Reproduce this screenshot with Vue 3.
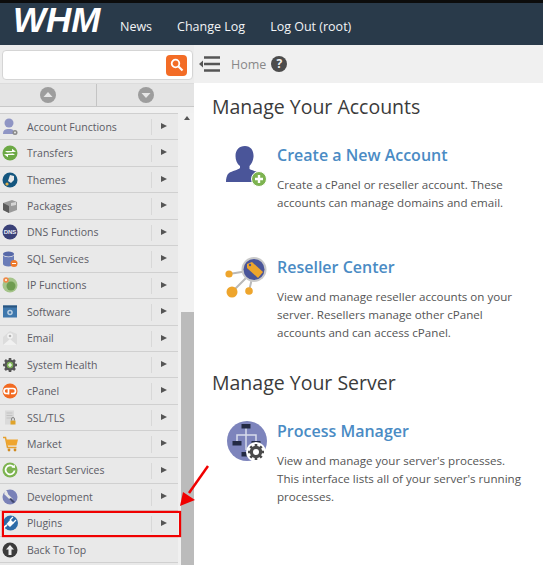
<script setup>
// sidebar entries, icon markup is on a 20x20 box
const menu = [
  { label: 'Account Functions', icon: '<circle cx="9" cy="6" r="4.5" fill="#8f95c4"/><path d="M3 17c0-4 2-5 6-5s5 1 5 5z" fill="#8f95c4"/><circle cx="15" cy="15.5" r="2.500" fill="#8a8a8a"/><circle cx="15" cy="15.5" r="1" fill="#e8e8e8"/>' },
  { label: 'Transfers', icon: '<circle cx="10" cy="10" r="7.5" fill="#6ca945"/><path d="M5 8h7V5.8l4 3-9 .6zM15 12H8v2.2l-4-3 9-.6z" fill="#fff"/>' },
  { label: 'Themes', icon: '<circle cx="10" cy="10" r="7.5" fill="#14567f"/><path d="M8 11l2-6 4 1 0 4-3 3z" fill="#e8e8e8"/><circle cx="7" cy="14" r="1.6" fill="#e0b050"/>' },
  { label: 'Packages', icon: '<path d="M3 7l9-3 5 2v8l-8 3-6-3z" fill="#9a9a9a"/><path d="M3 7l6 3v7l-6-3z" fill="#5a5a5a"/><path d="M11 7l5-1v3l-5 1z" fill="#d5d5d5"/>' },
  { label: 'DNS Functions', icon: '<circle cx="10" cy="10" r="7.5" fill="#3a4178"/><text x="10" y="12" text-anchor="middle" font-family="Liberation Sans, sans-serif" font-size="6" font-weight="700" fill="#eceef6">DNS</text>' },
  { label: 'SQL Services', icon: '<ellipse cx="8.500" cy="5" rx="5.500" ry="2.500" fill="#5668a8"/><path d="M3 6v9c0 1.500 2.500 2.500 5.500 2.500S14 16.500 14 15V6c-1 3-10 3-11 0z" fill="#6a7cb8"/><circle cx="14" cy="14.500" r="3.500" fill="#ee7a2c"/><rect x="12" y="14" width="4" height="1" fill="#fff"/>' },
  { label: 'IP Functions', icon: '<circle cx="10" cy="10" r="7.500" fill="#a5c48a"/><circle cx="11" cy="11" r="4.500" fill="#6f9c50"/><circle cx="6" cy="5" r="2.800" fill="#ee8a4a"/><circle cx="6" cy="5" r="1" fill="#fff"/>' },
  { label: 'Software', icon: '<rect x="3" y="3.500" width="14" height="12" fill="#3f78ad"/><rect x="3" y="3.500" width="14" height="2" fill="#2a5580"/><circle cx="10" cy="10.500" r="2.800" fill="#b9cfe2"/><circle cx="10" cy="10.500" r="1.200" fill="#3f78ad"/>' },
  { label: 'Email', icon: '<path d="M3 9l7-6 7 3v11H3z" fill="#dcdcdc"/><path d="M3 17l7-6 7 6z" fill="#f1f1f1"/><circle cx="10" cy="8" r="2.800" fill="#f5f5f5"/><circle cx="10" cy="8" r="1.300" fill="#b5b5b5"/>' },
  { label: 'System Health', icon: '<circle cx="10" cy="10" r="5.500" fill="#555"/><path d="M10 3v14M3 10h14M5 5l10 10M15 5L5 15" stroke="#555" stroke-width="2.600"/><circle cx="10" cy="10" r="3.200" fill="#7eb356"/><path d="M10 8v4M8 10h4" stroke="#fff" stroke-width="1.200"/>' },
  { label: 'cPanel', icon: '<circle cx="10" cy="10" r="7.500" fill="#f26a21"/><path d="M9 7.500H6.500a2.500 2.500 0 0 0 0 5H8M8.500 13.500V7.500h4.500a2.500 2.500 0 0 1 0 5h-2" fill="none" stroke="#fff" stroke-width="1.700"/>' },
  { label: 'SSL/TLS', icon: '<rect x="5" y="2.500" width="9" height="14" fill="#dadada"/><path d="M6.500 5h6M6.500 7.500h6M6.500 10h6" stroke="#c2c2c2"/><rect x="10.500" y="12.500" width="5" height="4" fill="#e0a32a"/><path d="M11.500 12.500v-1.500a1.500 1.500 0 0 1 3 0v1.500" fill="none" stroke="#888"/>' },
  { label: 'Market', icon: '<path d="M3 3.500h2.500l2 10h9" fill="none" stroke="#e6a02e" stroke-width="1.500"/><path d="M6 5.500h12l-1.500 6H7.500z" fill="#efa52f"/><circle cx="9" cy="16" r="1.400" fill="#d08a20"/><circle cx="15" cy="16" r="1.400" fill="#d08a20"/>' },
  { label: 'Restart Services', icon: '<circle cx="10" cy="10" r="7.5" fill="#7db350"/><path d="M13.500 7a4.500 4.500 0 1 0 1 3.500" fill="none" stroke="#fff" stroke-width="1.800"/><path d="M11.500 7.500l3.500 .5-.3-3.500z" fill="#fff"/>' },
  { label: 'Development', icon: '<circle cx="10" cy="10" r="7.5" fill="#7a82b8"/><path d="M5 6l7 7" stroke="#e6e6e6" stroke-width="2.500"/><path d="M11 11l4 4-2 1-4-4z" fill="#3f466e"/><path d="M4 4l3 0 1 3-3 1z" fill="#e6e6e6"/>' },
  { label: 'Plugins', icon: '<circle cx="10.500" cy="10" r="7.500" fill="#2c6ba8"/><path d="M3 15l4-3" stroke="#fff" stroke-width="1.600"/><path d="M6.500 11l4-4.500 3.500 3.500-4 4z" fill="#fff"/><path d="M10 7l3-3M13 10l3-3" stroke="#fff" stroke-width="1.300"/>' }
]

const nav = ['News', 'Change Log', 'Log Out (root)']
</script>

<template>
  <div class="page">
    <header class="topbar">
      <span class="logo">WHM</span>
      <nav class="nav">
        <a v-for="item in nav" :key="item">{{ item }}</a>
      </nav>
    </header>

    <div class="main">
      <aside class="sidebar">
        <div class="search">
          <div class="search-box">
            <span class="search-btn">
              <svg width="14" height="14" viewBox="0 0 14 14">
                <circle cx="5.500" cy="5.500" r="3.800" fill="none" stroke="#fff" stroke-width="1.800" />
                <path d="M8.500 8.500l4 4" stroke="#fff" stroke-width="2.200" />
              </svg>
            </span>
          </div>
        </div>
        <div class="arrows">
          <div class="arrow-cell">
            <svg width="16" height="16" viewBox="0 0 16 16">
              <circle cx="8" cy="8" r="8" fill="#9d9d9d" />
              <path d="M3.500 10L8 5l4.500 5z" fill="#e6e6e6" />
            </svg>
          </div>
          <div class="arrow-cell">
            <svg width="16" height="16" viewBox="0 0 16 16">
              <circle cx="8" cy="8" r="8" fill="#9d9d9d" />
              <path d="M3.500 6L8 11l4.500-5z" fill="#e6e6e6" />
            </svg>
          </div>
        </div>
        <div class="menu-wrap">
          <ul class="menu">
            <li v-for="item in menu" :key="item.label" class="menu-row">
              <svg class="menu-icon" width="20" height="20" viewBox="0 0 20 20" v-html="item.icon"></svg>
              <span class="menu-label">{{ item.label }}</span>
              <span class="menu-arrow"></span>
            </li>
            <li class="menu-row top-row">
              <svg class="menu-icon" width="20" height="20" viewBox="0 0 20 20">
                <circle cx="10" cy="10" r="7.500" fill="#3c3c3c" />
                <path d="M10 5l4 4.500h-2.500V15h-3V9.500H6z" fill="#eee" />
              </svg>
              <span class="menu-label">Back To Top</span>
            </li>
          </ul>
          <div class="scrollbar">
            <span class="scroll-up"></span>
            <div class="scroll-thumb"></div>
          </div>
        </div>
      </aside>

      <div class="content">
        <div class="crumbs">
          <svg width="22" height="18" viewBox="0 0 22 18">
            <path d="M0 9l4-3.500v7z" fill="#555" />
            <path d="M5 2.500h16M5 9h16M5 15.500h16" stroke="#555" stroke-width="2.600" />
          </svg>
          <span class="crumb-home">Home</span>
          <span class="crumb-help">?</span>
        </div>

        <section class="body">
          <h2>Manage Your Accounts</h2>
          <div class="entry first">
            <svg class="entry-icon" width="44" height="44" viewBox="0 0 44 44">
              <path d="M21 1c6 0 9 5 8.500 11-.4 4-2 7-4 9v3c4 2 11 3 12 8 .3 2 .5 5 .5 5H2c0-3 .5-7 3-9 3-2 9-3 11-5v-2c-3-2-4.500-6-4.500-10C11.500 5 15 1 21 1z" fill="#4a5599" />
              <circle cx="35" cy="34" r="7.500" fill="#7db350" stroke="#fff" stroke-width="1" />
              <path d="M35 30v8M31 34h8" stroke="#fff" stroke-width="2.400" />
            </svg>
            <div class="entry-text">
              <a class="entry-title">Create a New Account</a>
              <p>Create a cPanel or reseller account. These accounts can manage domains and email.</p>
            </div>
          </div>
          <div class="entry">
            <svg class="entry-icon" width="44" height="44" viewBox="0 0 44 44">
              <path d="M30 13L5 17M30 13L8 35M30 13l-5 21" stroke="#b9b9b9" stroke-width="2" />
              <circle cx="30" cy="12.500" r="12.500" fill="#c9c9c9" />
              <circle cx="30" cy="12.500" r="10.500" fill="#4a5599" />
              <path d="M23 7l5-2 11 10-5 6-11-10z" fill="#eea52c" />
              <circle cx="26" cy="8" r="1.200" fill="#4a5599" />
              <circle cx="5" cy="17" r="3.600" fill="#eea52c" />
              <circle cx="8" cy="35" r="5.500" fill="#eea52c" />
              <circle cx="25" cy="34" r="3.800" fill="#eea52c" />
            </svg>
            <div class="entry-text">
              <a class="entry-title">Reseller Center</a>
              <p>View and manage reseller accounts on your server. Resellers manage other cPanel accounts and can access cPanel.</p>
            </div>
          </div>

          <h2 class="second">Manage Your Server</h2>
          <div class="entry first">
            <svg class="entry-icon" width="44" height="44" viewBox="0 0 44 44">
              <circle cx="23" cy="20" r="20" fill="#7d84bc" />
              <path d="M22 7v22M13 20v-6h19v6" fill="none" stroke="#d8dbec" stroke-width="1.500" />
              <rect x="17.500" y="3" width="9" height="4.500" fill="#232a44" />
              <rect x="8.500" y="20" width="9" height="4.500" fill="#232a44" />
              <rect x="27.500" y="20" width="9" height="4.500" fill="#232a44" />
              <rect x="17.500" y="31" width="9" height="4.500" fill="#232a44" />
              <circle cx="32" cy="31" r="10" fill="#fff" />
              <path d="M32 23v16M24 31h16M26.300 25.300l11.400 11.400M37.700 25.300L26.300 36.700" stroke="#4a4a4a" stroke-width="2.600" />
              <circle cx="32" cy="31" r="6.200" fill="#4a4a4a" />
              <circle cx="32" cy="31" r="3" fill="#fff" />
            </svg>
            <div class="entry-text">
              <a class="entry-title">Process Manager</a>
              <p>View and manage your server's processes. This interface lists all of your server's running processes.</p>
            </div>
          </div>
        </section>
      </div>
    </div>

    <!-- screenshot annotation on top of the page -->
    <div class="mark-box"></div>
    <svg class="mark-arrow" width="30" height="42" viewBox="0 0 30 42">
      <path d="M29 1L10 28" stroke="#f00000" stroke-width="2.500" />
      <path d="M1 41l3-14 12 8z" fill="#f00000" />
    </svg>
  </div>
</template>

<style>
html,
body {
  margin: 0;
  overflow: hidden;
}
</style>

<style scoped>
.page {
  position: relative;
  width: 543px;
  height: 565px;
  overflow: hidden;
  background: #fff;
  font-family: "Open Sans", sans-serif;
  color: #444;
}
.topbar {
  display: flex;
  height: 42px;
  border-top: 3px solid #0c0c0c;
  background: #293a4a;
  padding-left: 13px;
}
.logo {
  width: 107px;
  font-family: "Liberation Sans", sans-serif;
  font-size: 35px;
  line-height: 33px;
  font-weight: 700;
  font-style: italic;
  color: #fff;
}
.nav {
  display: flex;
  gap: 25px;
  padding-top: 15px;
  font-size: 12.5px;
  color: #f2f4f6;
}
.main {
  display: flex;
  height: 520px;
}
.sidebar {
  display: flex;
  flex-direction: column;
  flex: none;
  width: 194px;
  background: #ececec;
}
.search {
  height: 38px;
  padding: 5px 2px 0 2px;
  box-sizing: border-box;
}
.search-box {
  display: flex;
  justify-content: flex-end;
  align-items: center;
  box-sizing: border-box;
  height: 30px;
  width: 191px;
  padding-right: 5px;
  background: #fff;
  border: 1px solid #d5d5d5;
  border-radius: 4px;
}
.search-btn {
  display: flex;
  align-items: center;
  justify-content: center;
  width: 21px;
  height: 21px;
  background: #f36c26;
  border-radius: 4px;
}
.arrows {
  display: flex;
  height: 24px;
  background: #e4e4e4;
  border-bottom: 1px solid #c8c8c8;
  border-top: 1px solid #dcdcdc;
  box-sizing: border-box;
}
.arrow-cell {
  display: flex;
  flex: 1;
  align-items: center;
  justify-content: center;
}
.arrow-cell:first-child {
  flex: none;
  width: 96px;
  border-right: 1px solid #c4c4c4;
}
.menu-wrap {
  display: flex;
  flex: 1;
  min-height: 0;
  padding-top: 6px;
  background: #f0f0f0;
}
.menu {
  list-style: none;
  margin: 0;
  padding: 0;
  width: 178px;
  background: #e9e9e9;
  border-top: 1px solid #cfcfcf;
}
.menu-row {
  display: flex;
  align-items: center;
  box-sizing: border-box;
  height: 26.45px;
  border-bottom: 1px solid #d0d0d0;
}
.menu-icon {
  flex: none;
}
.menu-label {
  flex: 1;
  margin-left: 7px;
  font-size: 10.5px;
  color: #5c5c66;
}
.menu-arrow {
  position: relative;
  flex: none;
  width: 27px;
  height: 100%;
}
.menu-arrow::before {
  content: "";
  position: absolute;
  left: 0;
  top: 5px;
  bottom: 4px;
  width: 1px;
  background: #d8d8d8;
}
.menu-arrow::after {
  content: "";
  position: absolute;
  left: 10px;
  top: 9px;
  border-left: 6px solid #555;
  border-top: 3.500px solid transparent;
  border-bottom: 3.500px solid transparent;
}
.top-row {
  height: 26px;
}
.scrollbar {
  position: relative;
  flex: none;
  width: 14px;
  margin-left: 2px;
  background: #f1f1f1;
}
.scroll-up {
  position: absolute;
  left: 4px;
  top: 3px;
  border-bottom: 4px solid #555;
  border-left: 3px solid transparent;
  border-right: 3px solid transparent;
}
.scroll-thumb {
  position: absolute;
  left: 1px;
  right: 0;
  top: 199px;
  bottom: 0;
  background: #bbb;
}
.content {
  flex: 1;
  min-width: 0;
}
.crumbs {
  display: flex;
  align-items: center;
  height: 38px;
  padding-left: 5px;
  background: #f0f0f0;
  box-sizing: border-box;
}
.crumb-home {
  margin-left: 10px;
  font-size: 12.5px;
  color: #888;
}
.crumb-help {
  width: 16px;
  height: 16px;
  margin-left: 5px;
  border-radius: 50%;
  background: #4c4c4c;
  color: #f0f0f0;
  font-size: 12px;
  font-weight: 700;
  line-height: 16px;
  text-align: center;
}
.body {
  padding: 10px 18px 0 18px;
}
h2 {
  margin: 0;
  font-size: 19.5px;
  line-height: 27px;
  font-weight: 400;
  color: #3b3b3b;
}
h2.second {
  margin-top: 27px;
}
.entry {
  display: flex;
  margin-top: 44px;
  padding-left: 12px;
}
.entry.first {
  margin-top: 24px;
}
.entry-icon {
  flex: none;
  margin-top: 1px;
}
.entry-text {
  margin-left: 9px;
}
.entry-title {
  display: block;
  font-size: 16px;
  line-height: 22px;
  font-weight: 600;
  color: #4a8bc4;
}
p {
  margin: 10px 0 0;
  font-size: 11.6px;
  line-height: 18px;
  color: #555;
}
.mark-box {
  position: absolute;
  left: 2px;
  top: 511px;
  width: 175px;
  height: 22px;
  border: 2px solid #f00000;
  box-shadow: 0 0 1px #f00000;
}
.mark-arrow {
  position: absolute;
  left: 179px;
  top: 465px;
}
</style>
